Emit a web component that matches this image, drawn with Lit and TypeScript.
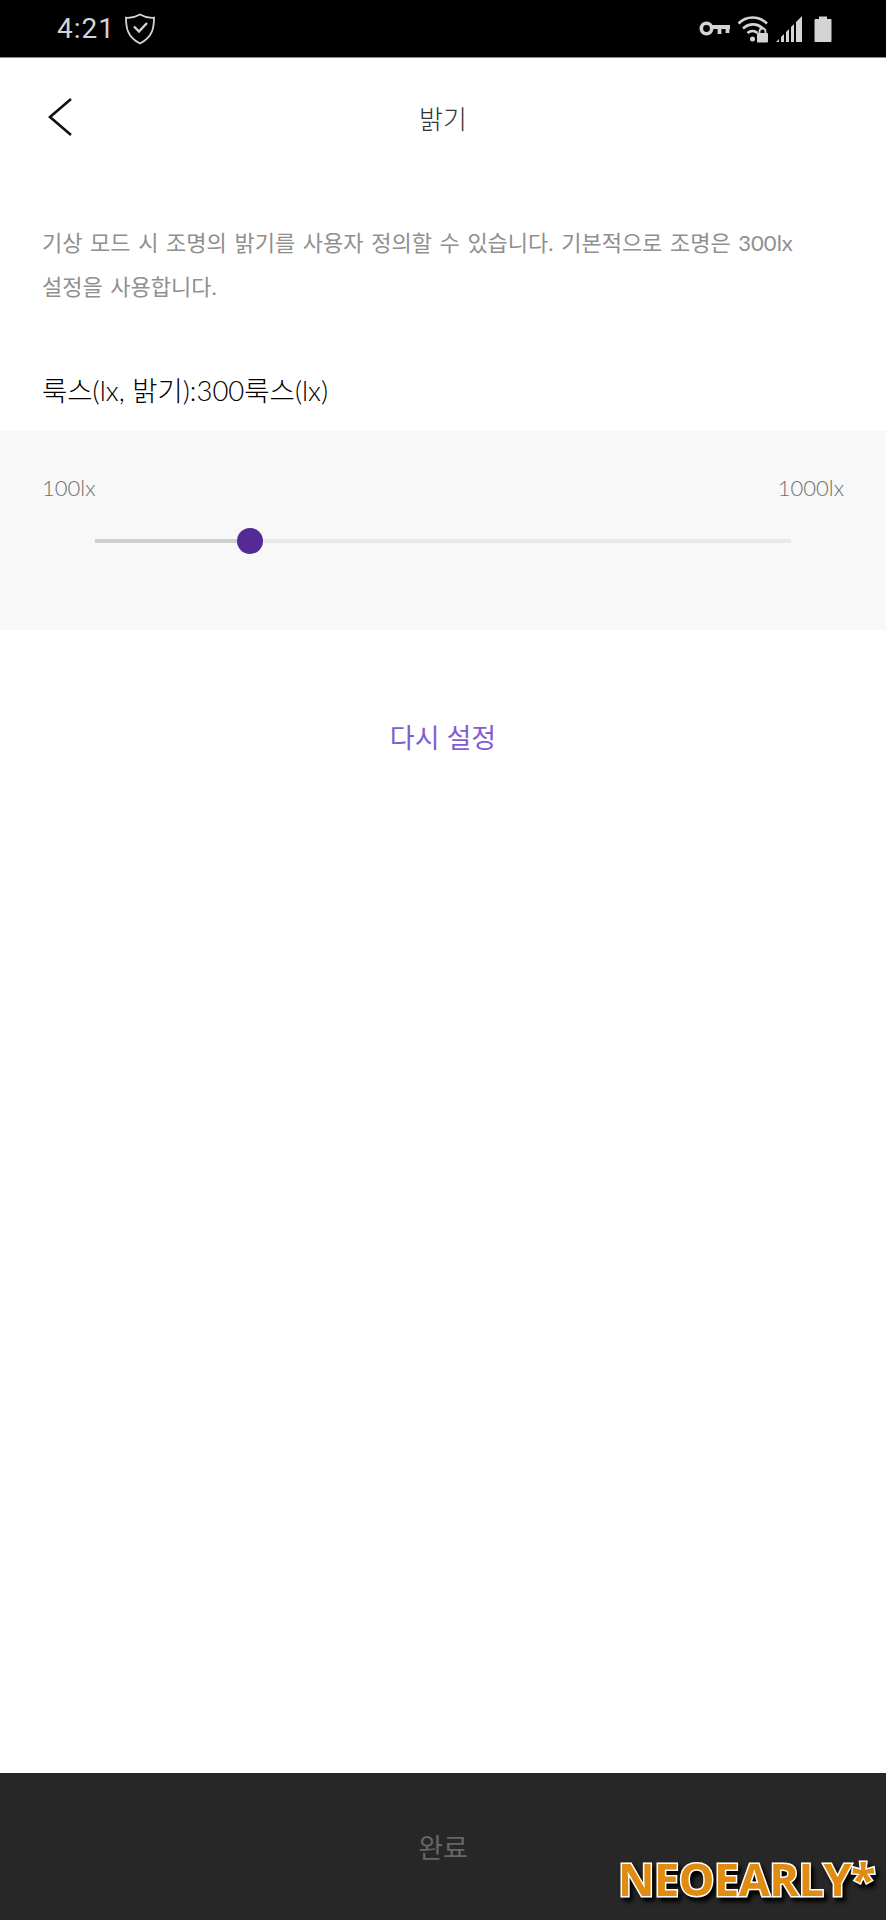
import {LitElement, html, css} from 'lit';
import {customElement, property} from 'lit/decorators.js';

@customElement('app-root')
export class AppRoot extends LitElement {
    @property({type: Number})
    percent = 22.3

    static override styles = css`
      :host {
        display: block;
        width: 886px;
        height: 1920px;
        background: #fff;
        font-family: 'Lato', 'Noto Sans CJK KR', sans-serif;
      }
      .page {
        height: 100%;
        display: flex;
        flex-direction: column;
        position: relative;
      }
      .status {
        height: 58px;
        flex: none;
        background: #000;
        border-bottom: 1px solid #8a8a8a;
        box-sizing: border-box;
        display: flex;
        align-items: center;
        padding: 0 54px 0 57px;
        color: #d4d4d4;
      }
      .time {
        font-family: 'Roboto', sans-serif;
        font-size: 28px;
        letter-spacing: 1px;
        margin-right: 9px;
      }
      .status-icons {
        margin-left: auto;
        display: flex;
        align-items: center;
      }
      .header {
        height: 119px;
        flex: none;
        display: flex;
        align-items: center;
        justify-content: center;
        position: relative;
        font-size: 26px;
        font-weight: 300;
        color: #333;
      }
      .back {
        position: absolute;
        left: 47px;
        top: 39px;
      }
      .desc {
        margin: 0;
        padding: 44px 60px 0 42px;
        font-size: 22px;
        line-height: 44px;
        word-spacing: 2px;
        word-break: keep-all;
        color: #8f8f8f;
      }
      .label {
        margin-top: 63px;
        padding-left: 42px;
        font-size: 27.5px;
        line-height: 38px;
        font-weight: 300;
        color: #000;
      }
      .panel {
        margin-top: 21px;
        height: 199px;
        flex: none;
        background: #f8f8f9;
        box-sizing: border-box;
        padding: 42px 42px 0;
      }
      .range {
        display: flex;
        justify-content: space-between;
        font-size: 22px;
        line-height: 30px;
        font-weight: 300;
        color: #6f6f6f;
      }
      .slider {
        position: relative;
        height: 4px;
        margin: 36px 53px 0;
        background: #e9e9e9;
      }
      .fill {
        height: 100%;
        background: #cfcfcf;
      }
      .knob {
        position: absolute;
        top: -11px;
        width: 26px;
        height: 26px;
        margin-left: -13px;
        border-radius: 50%;
        background: #542a93;
      }
      .reset {
        margin-top: 88px;
        text-align: center;
        font-size: 27px;
        line-height: 40px;
        color: #7f5fd0;
      }
      .spacer {
        flex: 1;
      }
      .footer {
        height: 147px;
        flex: none;
        background: #272727;
        display: flex;
        align-items: center;
        justify-content: center;
        font-size: 27px;
        color: #666;
      }
      .mark {
        position: absolute;
        right: 11px;
        bottom: 17px;
        font-family: 'Open Sans', sans-serif;
        font-size: 45px;
        line-height: 48px;
        font-weight: 700;
        letter-spacing: -0.5px;
        color: #e08c12;
        -webkit-text-stroke: 3px #fff;
        paint-order: stroke fill;
        filter: drop-shadow(3px 4px 2px #000);
      }
    `;

    override render() {
        return html`
            <div class="page">
                <div class="status">
                    <span class="time">4:21</span>
                    <svg width="32" height="32" viewBox="0 0 32 32" fill="none" stroke="#d4d4d4" stroke-width="1.8">
                        <path d="M16 1.500c4.500 2.600 9 3.600 14 3.200 0 9.500-1 18.800-14 25.800C3 23.500 2 14.200 2 4.700 7 5.100 11.500 4.100 16 1.500z"/>
                        <path d="M10 13.500l5 5 8-8.500" stroke-width="2.400"/>
                    </svg>
                    <div class="status-icons">
                        <svg width="32" height="16" viewBox="0 0 32 16" fill="none" stroke="#d4d4d4" style="margin-right:6px">
                            <circle cx="7.500" cy="7.500" r="5.200" stroke-width="3.600"/>
                            <path d="M13 6h18M20.500 6v7M28.500 6v6" stroke-width="3.800"/>
                        </svg>
                        <svg width="32" height="28" viewBox="0 0 32 28" style="margin-right:6px">
                            <g fill="none" stroke="#d4d4d4" stroke-width="2.600">
                                <path d="M1.500 8.500C9.500 .5 21.500 .5 30 8.500"/>
                                <path d="M6 13.500c6-5.500 14-5.500 20 0"/>
                                <path d="M10.500 18c3-2.500 7-2.500 10 0"/>
                            </g>
                            <circle cx="15.500" cy="24" r="2.500" fill="#d4d4d4"/>
                            <rect x="20" y="18" width="11" height="9.500" rx="1" fill="#d4d4d4"/>
                            <path d="M22.500 18.500v-2a3 3 0 0 1 6 0v2" fill="none" stroke="#d4d4d4" stroke-width="1.800"/>
                        </svg>
                        <svg width="28" height="28" viewBox="0 0 28 28" fill="#d4d4d4" style="margin-right:11px">
                            <path d="M1 27l3-3v3zM6 27v-5l3-3v8zM11 27V17l3-3v13zM16 27V12l3-3v18zM21 27V7l6-6v26z"/>
                        </svg>
                        <svg width="18" height="28" viewBox="0 0 18 28" fill="#d4d4d4">
                            <path d="M5 1.500h8v2.500h3.500a1 1 0 0 1 1 1v21a1 1 0 0 1-1 1h-15a1 1 0 0 1-1-1V5a1 1 0 0 1 1-1H5z"/>
                        </svg>
                    </div>
                </div>
                <div class="header">
                    <svg class="back" width="26" height="40" viewBox="0 0 26 40" fill="none" stroke="#111" stroke-width="2.600">
                        <path d="M24 2L3 20l21 18"/>
                    </svg>
                    <span>밝기</span>
                </div>
                <p class="desc">기상 모드 시 조명의 밝기를 사용자 정의할 수 있습니다. 기본적으로 조명은 300lx 설정을 사용합니다.</p>
                <div class="label">룩스(lx, 밝기):300룩스(lx)</div>
                <div class="panel">
                    <div class="range"><span>100lx</span><span>1000lx</span></div>
                    <div class="slider">
                        <div class="fill" style="width:${this.percent}%"></div>
                        <div class="knob" style="left:${this.percent}%"></div>
                    </div>
                </div>
                <div class="reset">다시 설정</div>
                <div class="spacer"></div>
                <div class="footer">완료</div>
                <div class="mark">NEOEARLY*</div>
            </div>
    `;
    }
}

declare global {
    interface HTMLElementTagNameMap {
        'app-root': AppRoot;
    }
}
